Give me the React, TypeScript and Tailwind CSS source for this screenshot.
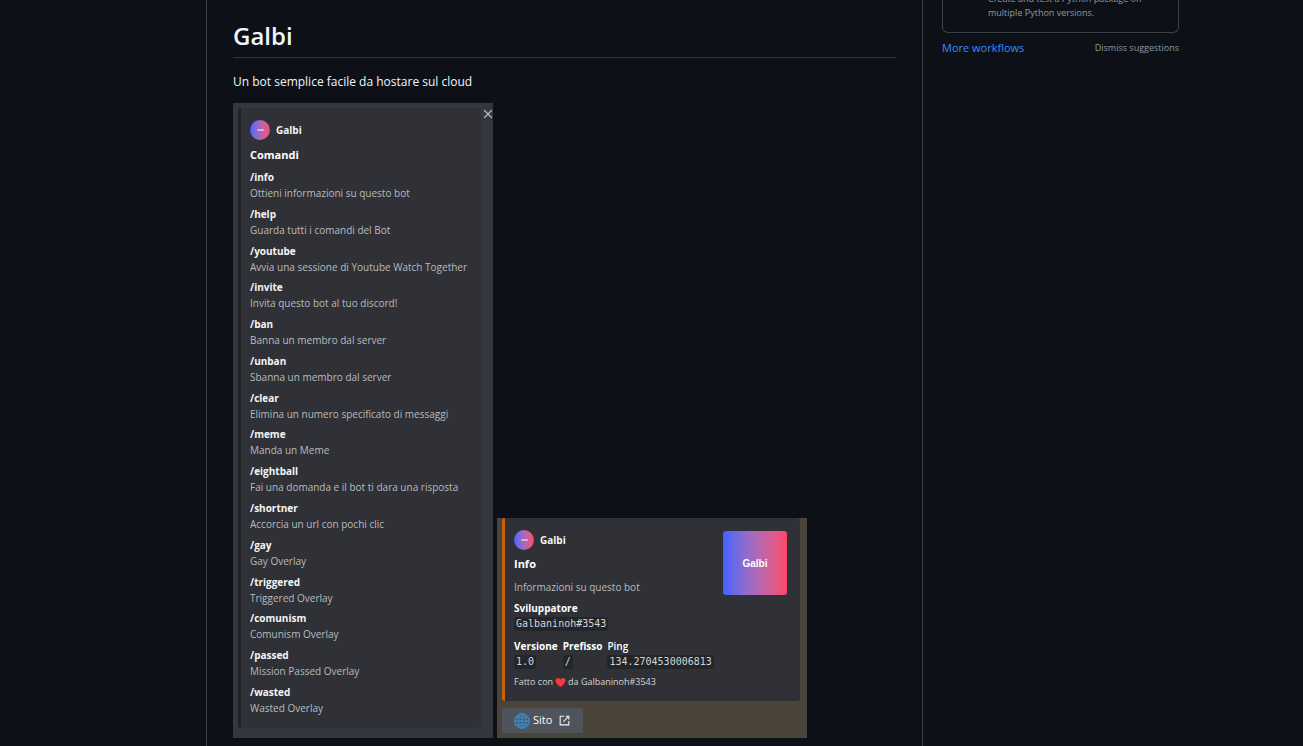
import { X } from 'lucide-react'

interface Command {
  name: string
  text: string
}

const COMMANDS: Command[] = [
  { name: '/info', text: 'Ottieni informazioni su questo bot' },
  { name: '/help', text: 'Guarda tutti i comandi del Bot' },
  { name: '/youtube', text: 'Avvia una sessione di Youtube Watch Together' },
  { name: '/invite', text: 'Invita questo bot al tuo discord!' },
  { name: '/ban', text: 'Banna un membro dal server' },
  { name: '/unban', text: 'Sbanna un membro dal server' },
  { name: '/clear', text: 'Elimina un numero specificato di messaggi' },
  { name: '/meme', text: 'Manda un Meme' },
  { name: '/eightball', text: 'Fai una domanda e il bot ti dara una risposta' },
  { name: '/shortner', text: 'Accorcia un url con pochi clic' },
  { name: '/gay', text: 'Gay Overlay' },
  { name: '/triggered', text: 'Triggered Overlay' },
  { name: '/comunism', text: 'Comunism Overlay' },
  { name: '/passed', text: 'Mission Passed Overlay' },
  { name: '/wasted', text: 'Wasted Overlay' },
]

function BotName() {
  return (
    <div className="flex items-center gap-1.5">
      <div className="flex size-5 items-center justify-center rounded-full bg-linear-to-r from-[#3f62ff] to-[#ff4468]">
        <div className="h-0.5 w-[7px] rounded-full bg-white/50" />
      </div>
      <span className="text-[10px] leading-5 font-bold text-[#f2f3f4]">Galbi</span>
    </div>
  )
}

function Code({ children }: { children: string }) {
  return (
    <code className="my-px block w-fit rounded-xs bg-[#232529] px-0.5 font-['DejaVu_Sans_Mono',monospace] text-[10px] leading-[14px] text-[#d3d5d8]">
      {children}
    </code>
  )
}

function CommandsEmbed() {
  return (
    <section className="relative w-[260px] bg-[#34373e] pt-[5px] pr-3 pb-2.5 pl-[5px] font-['Open_Sans',sans-serif]">
      <button aria-label="Chiudi" className="absolute top-1 right-[-2px] text-[#b9bbbe]">
        <X className="size-[14px]" strokeWidth={2} />
      </button>
      <div className="rounded-[3px] border-l-[3px] border-[#202225] bg-[#2f3136] pt-3 pb-3 pl-[9px]">
        <BotName />
        <h2 className="mt-[7px] text-[11px] leading-4 font-bold text-white">Comandi</h2>
        <ul className="mt-1.5 flex h-[547px] flex-col justify-between">
          {COMMANDS.map(c => (
            <li key={c.name} className="text-[10px] leading-4 whitespace-nowrap">
              <h3 className="font-bold text-[#f4f5f6]">{c.name}</h3>
              <p className="text-[#b9bbbe]">{c.text}</p>
            </li>
          ))}
        </ul>
      </div>
    </section>
  )
}

function InfoEmbed() {
  return (
    <section className="w-[310px] bg-[#4b443a] pr-[7px] pb-[5px] pl-[5px] font-['Open_Sans',sans-serif]">
      <div className="flex justify-between rounded-[3px] border-l-[3px] border-[#c96210] bg-[#2f3136] pt-3 pr-[13px] pb-[11px] pl-[9px]">
        <div>
          <BotName />
          <h2 className="mt-1.5 text-[11px] leading-4 font-bold text-white">Info</h2>
          <p className="mt-[7px] text-[10px] leading-4 text-[#b9bbbe]">Informazioni su questo bot</p>
          <h3 className="mt-[5px] text-[10px] leading-4 font-bold text-white">Sviluppatore</h3>
          <Code>Galbaninoh#3543</Code>
          <dl className="mt-[7px] flex gap-[5px] text-[10px] leading-4 text-white">
            <div>
              <dt className="font-bold">Versione</dt>
              <dd><Code>1.0</Code></dd>
            </div>
            <div>
              <dt className="font-bold">Prefisso</dt>
              <dd><Code>/</Code></dd>
            </div>
            <div>
              <dt className="font-semibold">Ping</dt>
              <dd><Code>134.2704530006813</Code></dd>
            </div>
          </dl>
          <p className="mt-1 flex items-center gap-0.5 text-[9px] leading-4 text-[#d3d5d8]">
            Fatto con
            <svg viewBox="0 0 24 24" className="size-[11px]" fill="#f4383c" aria-label="cuore">
              <path d="M12 22C7 18 1 13 1 7.500C1 4 3.500 2 6.500 2C9 2 11 3.500 12 5.500C13 3.500 15 2 17.500 2C20.500 2 23 4 23 7.500C23 13 17 18 12 22Z" />
            </svg>
            da Galbaninoh#3543
          </p>
        </div>
        <div className="mt-px flex size-16 shrink-0 items-center justify-center rounded-[3px] bg-linear-to-r from-[#3f62ff] to-[#ff4468] font-['Liberation_Sans',sans-serif] text-[10px] font-bold text-white">
          Galbi
        </div>
      </div>
      <a href="#sito" className="mt-[7px] flex h-[25px] w-[81px] items-center rounded-xs bg-[#4f545c] pl-3 text-[11px] text-white">
        <svg viewBox="0 0 16 16" className="size-4" fill="none" stroke="#3b88c3" strokeWidth="1.3">
          <circle cx="8" cy="8" r="7.200" />
          <ellipse cx="8" cy="8" rx="3.700" ry="7.200" />
          <path d="M8 1V15M1 8H15M2 4.500H14M2 11.500H14" />
        </svg>
        <span className="ml-[3px]">Sito</span>
        <svg viewBox="0 0 24 24" className="ml-1.5 size-[13px]" fill="#f2f3f4">
          <path d="M11 3V5H5V19H19V13H21V21H3V3H11Z" />
          <path d="M14 3H21V10H19V6.400L10.700 14.700L9.300 13.300L17.600 5H14V3Z" />
        </svg>
      </a>
    </section>
  )
}

export default function App() {
  return (
    <div className="min-h-screen overflow-hidden bg-[#0d1117] font-['Open_Sans',sans-serif]">
      <div className="mx-auto flex min-h-screen max-w-[1055px]">
        <main className="ml-[82px] min-w-0 flex-1 border-x border-[#3b4048] px-[26px] pt-5 pb-2">
          <h1 className="border-b border-[#2f353d] pb-[5px] text-2xl leading-8 font-semibold text-[#f0f6fc]">Galbi</h1>
          <p className="mt-3.5 text-xs leading-5 text-[#f0f6fc]">Un bot semplice facile da hostare sul cloud</p>
          <div className="mt-[11px] flex items-end gap-1">
            <CommandsEmbed />
            <InfoEmbed />
          </div>
        </main>
        <aside className="w-64 shrink-0 pl-[19px]">
          <div className="-mt-2 rounded-b-md border border-t-0 border-[#3b4048] pr-6 pb-3 pl-[45px] text-[9px] leading-[14px] text-[#9198a1]">
            Create and test a Python package on multiple Python versions.
          </div>
          <div className="mt-1.5 flex items-center justify-between leading-[18px]">
            <a href="#workflows" className="text-[11px] text-[#388bfd]">More workflows</a>
            <button className="text-[9px] text-[#9198a1]">Dismiss suggestions</button>
          </div>
        </aside>
      </div>
    </div>
  )
}
